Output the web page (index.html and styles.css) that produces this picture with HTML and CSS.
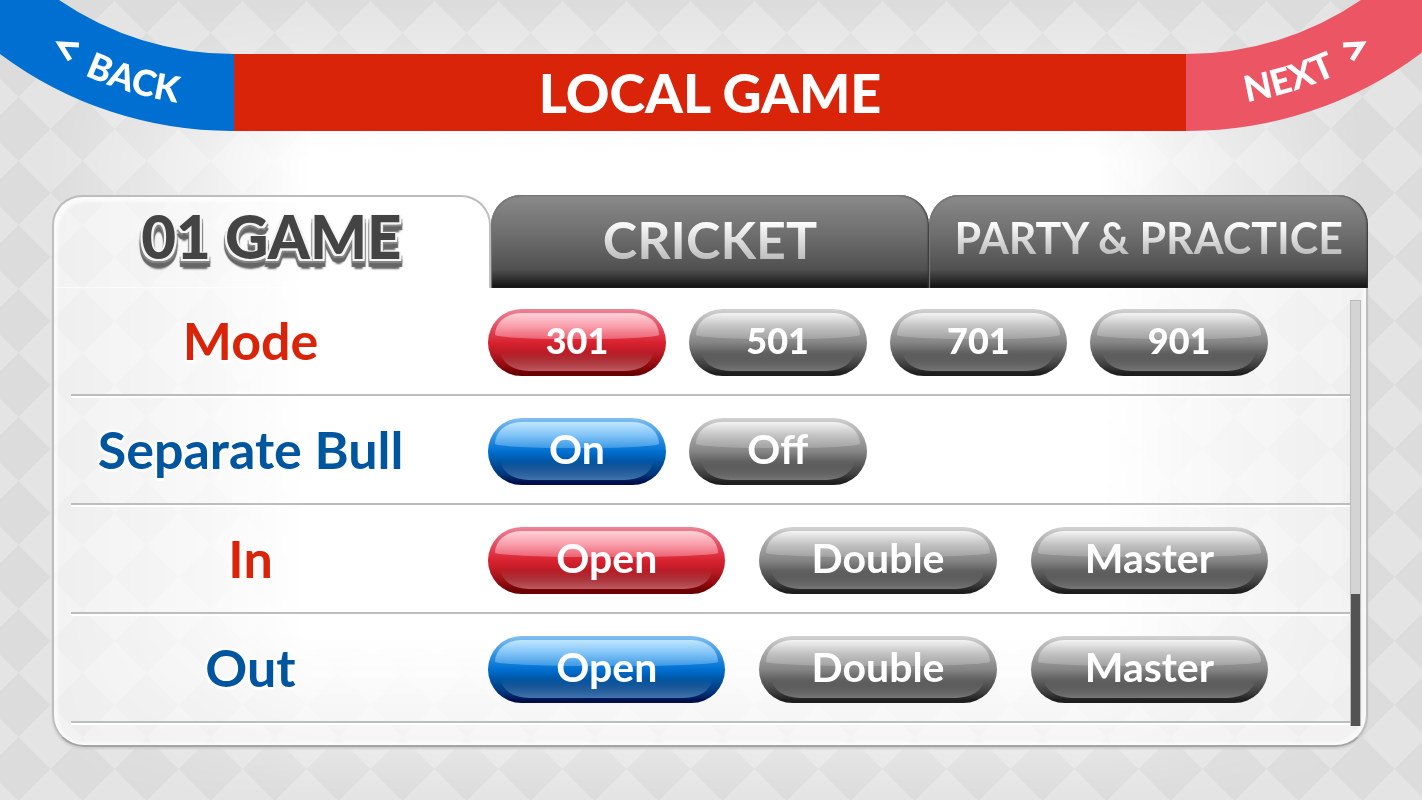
FILE: index.html
```
<!DOCTYPE html>
<html lang="en">
<head>
  <meta charset="UTF-8" />
  <meta name="viewport" content="width=device-width, initial-scale=1" />
  <title>Local Game</title>
  <link rel="stylesheet" href="styles.css">
</head>
<body>
  <header class="topbar">
    <a class="corner" href="#back" aria-label="Back">
      <svg width="234" height="132" viewBox="0 0 234 132">
        <path fill="#006fd2" d="M0 0H59A310 310 0 0 0 234 54V131A387 387 0 0 1 0 54Z"/>
        <path id="backArc" fill="none" d="M0 22A363 363 0 0 0 234 107"/>
        <path class="arrow" d="M79 45L60 44L70 60"/>
        <text><textPath href="#backArc" startOffset="100">BACK</textPath></text>
      </svg>
    </a>
    <h1>LOCAL GAME</h1>
    <a class="corner" href="#next" aria-label="Next">
      <svg width="236" height="132" viewBox="0 0 236 132">
        <path fill="#ec5564" d="M236 0H175A310 310 0 0 1 0 54V131A387 387 0 0 0 234 54L236 52Z"/>
        <path id="nextArc" fill="none" d="M0 107A363 363 0 0 0 234 22"/>
        <path class="arrow" d="M157 45L176 44L166 60"/>
        <text><textPath href="#nextArc" startOffset="61">NEXT</textPath></text>
      </svg>
    </a>
  </header>

  <main>
    <nav class="tabs">
      <button class="tab active"><span>01 GAME</span></button>
      <button class="tab"><span>CRICKET</span></button>
      <button class="tab small"><span>PARTY &amp; PRACTICE</span></button>
    </nav>

    <div class="panel">
      <div class="rows">
        <div class="row" role="group" aria-labelledby="mode">
          <h2 class="red" id="mode">Mode</h2>
          <div class="options four">
            <button class="pill number red-pill" aria-pressed="true"><span>301</span></button>
            <button class="pill number"><span>501</span></button>
            <button class="pill number"><span>701</span></button>
            <button class="pill number"><span>901</span></button>
          </div>
        </div>
        <div class="row" role="group" aria-labelledby="bull">
          <h2 class="blue" id="bull">Separate Bull</h2>
          <div class="options four">
            <button class="pill blue-pill" aria-pressed="true"><span>On</span></button>
            <button class="pill"><span>Off</span></button>
          </div>
        </div>
        <div class="row" role="group" aria-labelledby="in">
          <h2 class="red" id="in">In</h2>
          <div class="options three">
            <button class="pill red-pill" aria-pressed="true"><span>Open</span></button>
            <button class="pill"><span>Double</span></button>
            <button class="pill"><span>Master</span></button>
          </div>
        </div>
        <div class="row" role="group" aria-labelledby="out">
          <h2 class="blue" id="out">Out</h2>
          <div class="options three">
            <button class="pill blue-pill" aria-pressed="true"><span>Open</span></button>
            <button class="pill"><span>Double</span></button>
            <button class="pill"><span>Master</span></button>
          </div>
        </div>
      </div>
      <div class="scrollbar"><div class="thumb"></div></div>
    </div>
  </main>
</body>
</html>
```
FILE: styles.css
```
:root {
  --red: #da2409;
  --blue: #00559f;
  --line: #bcbebe;
}

* {
  box-sizing: border-box;
}

body {
  margin: 0;
  min-height: 100vh;
  font-family: Lato, "Noto Sans", sans-serif;
  background-color: #e4e4e4;
  background-image:
    linear-gradient(45deg, #dcdcdc 25%, transparent 25%, transparent 75%, #dcdcdc 75%),
    linear-gradient(-45deg, #dcdcdc 25%, transparent 25%, transparent 75%, #dcdcdc 75%);
  background-size: 64px 64px;
  background-position: 18px 1px;
}

/* white glow behind the panel */
body::before {
  content: "";
  position: fixed;
  inset: 0;
  z-index: -1;
  background: #fff;
  -webkit-mask-image:
    linear-gradient(to right, transparent 3%, rgba(0,0,0,0.5) 14%, #000 22%, #000 77%, rgba(0,0,0,0.5) 85%, transparent 96%),
    linear-gradient(to bottom, transparent, rgba(0,0,0,0.25) 7%, rgba(0,0,0,0.9) 16%, #000 20%, #000 79%, rgba(0,0,0,0.3) 93%, transparent);
  -webkit-mask-composite: source-in;
  mask-composite: intersect;
}

.topbar {
  display: flex;
  align-items: flex-start;
}

.topbar h1 {
  flex: 1;
  height: 77px;
  margin: 54px 0 0;
  background: var(--red);
  color: #fff;
  font-size: 54px;
  font-weight: 900;
  line-height: 77px;
  text-align: center;
  white-space: nowrap;
}

.corner svg {
  display: block;
}

.corner text {
  fill: #fff;
  font-size: 36px;
  font-weight: 900;
}

.arrow {
  fill: none;
  stroke: #fff;
  stroke-width: 5;
}

main {
  margin: 63px 54px 0 52px;
}

.tabs {
  display: grid;
  grid-template-columns: repeat(3, 1fr);
}

.tab {
  height: 93px;
  padding: 0 0 6px;
  border: 0;
  border-radius: 30px 30px 0 0;
  background: linear-gradient(#8a8a8a, #6c6c6c 45%, #505050 80%, #1a1a1a 97%, #111);
  box-shadow: inset 1px 1px 1px #777, inset -1px 0 2px #333;
  font-family: inherit;
  font-size: 52px;
  font-weight: 700;
  line-height: 60px;
  white-space: nowrap;
  cursor: pointer;
}

.tab span {
  background: linear-gradient(#fff 20%, #bbb 85%);
  -webkit-background-clip: text;
  background-clip: text;
  color: transparent;
}

.tab.small {
  font-size: 43px;
  padding-bottom: 8px;
}

.tab.active {
  padding-bottom: 14px;
  border: 2px solid var(--line);
  border-bottom: 0;
  background: rgba(255, 255, 255, 0.5);
  box-shadow: inset 4px 5px 3px rgba(255, 255, 255, 0.7);
  font-size: 60px;
  font-weight: 900;
}

.tab.active span {
  background: none;
  color: #444;
  text-shadow:
    -2px 0 #f4f4f4, 2px 0 #f4f4f4, 0 -1px #f4f4f4, 0 2px #f4f4f4,
    -2px 2px #f4f4f4, 2px 2px #f4f4f4,
    -3px 4px 1px #888, 3px 4px 1px #888,
    -3px 8px 1px #666, 3px 8px 1px #666, 0 10px 2px #666;
}

.panel {
  display: flex;
  margin-top: -1px;
  padding: 0 5px 0 17px;
  border: 2px solid var(--line);
  border-top: 0;
  border-bottom-color: #a4a4a4;
  border-radius: 0 0 32px 32px;
  background: rgba(255, 255, 255, 0.5);
  box-shadow: inset 4px 0 3px rgba(255, 255, 255, 0.6), inset -4px -3px 3px rgba(255, 255, 255, 0.6), 0 2px 2px #ccc;
}

.rows {
  flex: 1;
  padding-bottom: 22px;
}

.row {
  display: grid;
  grid-template-columns: 30% 1fr;
  column-gap: 58px;
  align-items: center;
  height: 109px;
  padding: 4px 82px 0 0;
  border-bottom: 2px solid var(--line);
  box-shadow: 0 2px #fff;
}

.row h2 {
  margin: 0;
  padding-bottom: 6px;
  font-size: 52px;
  font-weight: 700;
  line-height: 60px;
  text-align: center;
  white-space: nowrap;
  text-shadow: -2px -2px 1px #fff, 2px -2px 1px #fff, -2px 2px 1px #fff, 2px 2px 1px #fff, 0 3px 1px #fff;
}

.red {
  color: var(--red);
}

.blue {
  color: var(--blue);
}

.options {
  display: grid;
}

.four {
  grid-template-columns: repeat(4, 1fr);
  gap: 23px;
}

.three {
  grid-template-columns: repeat(3, 1fr);
  gap: 34px;
}

.pill {
  --base: linear-gradient(#d2d2d2, #a8a8a8 25%, #858585 50%, #5e5e5e 66%, #3c3c3c 85%, #1e1e1e 96%);
  --top: linear-gradient(#f4f4f4, #c4c4c4 50%, #a2a2a2);
  --bottom: linear-gradient(rgba(125, 125, 125, 0), #777);
  position: relative;
  height: 67px;
  padding: 0 0 6px;
  border: 0;
  border-radius: 34px;
  background: var(--base);
  color: #fff;
  font-family: inherit;
  font-size: 41px;
  font-weight: 700;
  line-height: 60px;
  cursor: pointer;
}

.number {
  font-size: 36px;
  font-weight: 900;
}

/* gloss on the upper half, reflection on the lower */
.pill::before,
.pill::after {
  content: "";
  position: absolute;
}

.pill::before {
  inset: 4px 7px 37px;
  border-radius: 30px 30px 50% 50% / 25px 25px 5px 5px;
  background: var(--top);
}

.pill::after {
  inset: 43px 13px 5px;
  border-radius: 0 0 28px 28px / 0 0 19px 19px;
  background: var(--bottom);
}

.pill span {
  position: relative;
  z-index: 1;
}

.red-pill {
  --base: linear-gradient(#ee8496, #e25064 25%, #d9222f 50%, #b81a24 66%, #8e0a0e 85%, #6a0000 96%);
  --top: linear-gradient(#ffd2d8, #f9a0ac 50%, #ec6374);
  --bottom: linear-gradient(rgba(190, 70, 80, 0), #c05a62);
}

.blue-pill {
  --base: linear-gradient(#84c0f0, #3a96e2 25%, #006fd2 50%, #00539f 66%, #003478 85%, #000f4c 96%);
  --top: linear-gradient(#c0e6ff, #82c4f8 50%, #3e9ae4);
  --bottom: linear-gradient(rgba(60, 120, 180, 0), #3f76b0);
}

.scrollbar {
  display: flex;
  align-items: flex-end;
  width: 11px;
  margin: 13px 0 19px;
  border: 1px solid #bbb;
  border-bottom: 0;
  background: #d4d4d4;
}

.thumb {
  width: 100%;
  height: 31%;
  background: #535353;
}
```
